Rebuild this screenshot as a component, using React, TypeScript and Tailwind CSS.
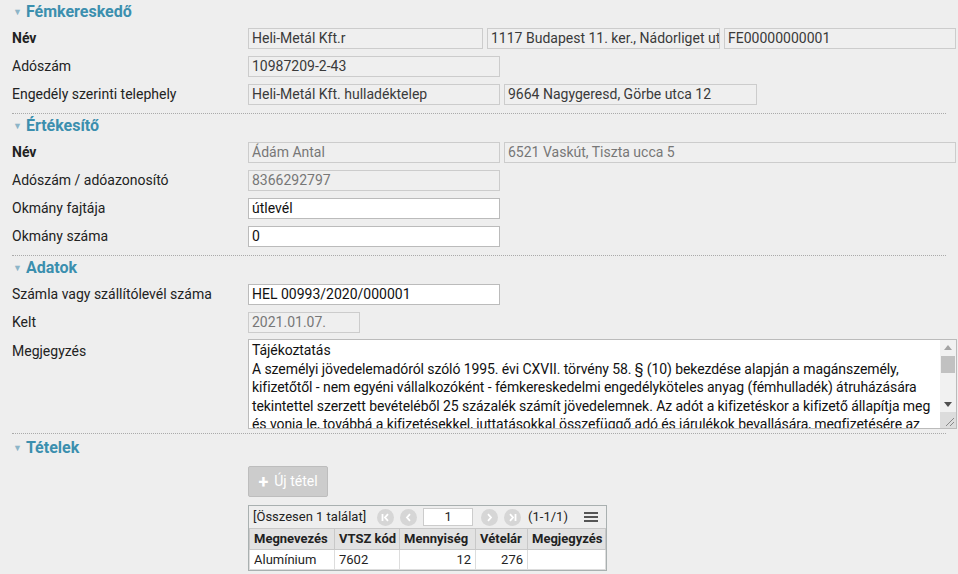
import React from 'react'

const font = { fontFamily: 'Roboto, "Noto Sans", Arial, sans-serif' }

function SectionHeader({ title, className = '' }: { title: string; className?: string }) {
  return (
    <div className={`flex h-[24px] items-center pl-[13px] ${className}`}>
      <span className="mr-[4px] text-[9px] leading-none text-[#8db5c8]">▼</span>
      <span className="text-[16px] font-bold text-[#3b8fae]">{title}</span>
    </div>
  )
}

function Row({ label, bold, children }: { label: string; bold?: boolean; children: React.ReactNode }) {
  return (
    <div className="flex h-[28px] items-center">
      <div className={`w-[248px] pl-[12px] text-[14px] text-[#222] ${bold ? 'font-bold' : ''}`}>{label}</div>
      <div className="flex gap-[4px]">{children}</div>
    </div>
  )
}

function Field({ value, w, ro = true, dark }: { value: string; w: string; ro?: boolean; dark?: boolean }) {
  return (
    <div
      className={`flex h-[21px] items-center overflow-hidden whitespace-nowrap border px-[3px] text-[14px] ${w} ${
        ro ? 'border-[#cccccc] bg-[#efefef]' : 'border-[#bbbbbb] bg-white'
      } ${dark ? 'text-[#3a3a3a]' : ro ? 'text-[#777]' : 'text-[#111]'}`}
    >
      {value}
    </div>
  )
}

function Sep({ className = '' }: { className?: string }) {
  return <div className={`mx-[12px] border-b border-dotted border-[#aaaaaa] ${className}`} />
}

function Circle({ dir, bar, className = '' }: { dir: 'l' | 'r'; bar?: boolean; className?: string }) {
  return (
    <span className={`flex h-[17px] w-[17px] shrink-0 items-center justify-center rounded-full bg-[#d6d6d6] ${className}`}>
      <svg width="9" height="9" viewBox="0 0 9 9" fill="none" stroke="#fff" strokeWidth="1.8">
        {dir === 'l' ? (
          <>
            {bar && <path d="M1.5 1v7" />}
            <path d={bar ? 'M7 1.2 4 4.5 7 7.8' : 'M6 1.2 3 4.5 6 7.8'} />
          </>
        ) : (
          <>
            <path d={bar ? 'M2 1.2 5 4.5 2 7.8' : 'M3 1.2 6 4.5 3 7.8'} />
            {bar && <path d="M7.5 1v7" />}
          </>
        )}
      </svg>
    </span>
  )
}

const note =
  'Tájékoztatás\nA személyi jövedelemadóról szóló 1995. évi CXVII. törvény 58. § (10) bekezdése alapján a magánszemély, kifizetőtől - nem egyéni vállalkozóként - fémkereskedelmi engedélyköteles anyag (fémhulladék) átruházására tekintettel szerzett bevételéből 25 százalék számít jövedelemnek. Az adót a kifizetéskor a kifizető állapítja meg és vonja le, továbbá a kifizetésekkel, juttatásokkal összefüggő adó és járulékok bevallására, megfizetésére az adóhatóság felé a kifizető köteles.'

function NoteBox() {
  return (
    <div className="flex h-[90px] w-[709px] border border-[#bbbbbb] bg-white">
      <div className="flex-1 overflow-hidden whitespace-pre-wrap pl-[3px] pr-[1px] pt-[1px] text-[14px] leading-[18.6px] tracking-[-0.08px] text-[#111]">
        {note}
      </div>
      <div className="flex w-[16px] flex-col bg-[#f1f1f1]">
        <div className="flex h-[15px] items-center justify-center">
          <svg width="8" height="5" viewBox="0 0 8 5">
            <path d="M0 5 4 0 8 5z" fill="#a3a3a3" />
          </svg>
        </div>
        <div className="mx-[1px] mt-[1px] h-[17px] bg-[#c1c1c1]" />
        <div className="flex-1" />
        <div className="flex h-[15px] items-center justify-center">
          <svg width="8" height="5" viewBox="0 0 8 5">
            <path d="M0 0h8L4 5z" fill="#505050" />
          </svg>
        </div>
        <div className="flex h-[16px] items-end justify-end bg-[#dcdcdc] p-[2px]">
          <svg width="9" height="9" viewBox="0 0 9 9" stroke="#888" strokeWidth="1">
            <path d="M9 1 1 9M9 5 5 9" />
          </svg>
        </div>
      </div>
    </div>
  )
}

export default function App() {
  return (
    <div className="h-[574px] w-[958px] overflow-hidden bg-[#eeeeee]" style={font}>
      <SectionHeader title="Fémkereskedő" />
      <Row label="Név" bold>
        <Field value="Heli-Metál Kft.r" w="w-[235px]" dark />
        <Field value="1117 Budapest 11. ker., Nádorliget utca 7" w="w-[233px]" dark />
        <Field value="FE00000000001" w="w-[232px]" dark />
      </Row>
      <Row label="Adószám">
        <Field value="10987209-2-43" w="w-[252px]" dark />
      </Row>
      <Row label="Engedély szerinti telephely">
        <Field value="Heli-Metál Kft. hulladéktelep" w="w-[252px]" dark />
        <Field value="9664 Nagygeresd, Görbe utca 12" w="w-[253px]" dark />
      </Row>
      <Sep className="mt-[5px]" />

      <SectionHeader title="Értékesítő" />
      <Row label="Név" bold>
        <Field value="Ádám Antal" w="w-[252px]" />
        <Field value="6521 Vaskút, Tiszta ucca 5" w="w-[452px]" />
      </Row>
      <Row label="Adószám / adóazonosító">
        <Field value="8366292797" w="w-[252px]" />
      </Row>
      <Row label="Okmány fajtája">
        <Field value="útlevél" w="w-[252px]" ro={false} />
      </Row>
      <Row label="Okmány száma">
        <Field value="0" w="w-[252px]" ro={false} />
      </Row>
      <Sep className="mt-[5px]" />

      <SectionHeader title="Adatok" />
      <Row label="Számla vagy szállítólevél száma">
        <Field value="HEL 00993/2020/000001" w="w-[252px]" ro={false} />
      </Row>
      <Row label="Kelt">
        <Field value="2021.01.07." w="w-[112px]" />
      </Row>
      <div className="mt-[3px] flex">
        <div className="w-[248px] pl-[12px] pt-[2px] text-[14px] text-[#222]">Megjegyzés</div>
        <NoteBox />
      </div>
      <Sep className="mt-[4px]" />

      <SectionHeader title="Tételek" className="mt-[2px]" />
      <div className="pl-[248px]">
        <button className="mt-[6px] flex h-[31px] w-[80px] items-center justify-center gap-[6px] rounded-[2px] border border-[#bdbdbd] bg-[#cccccc] text-[14px] text-white">
          <span className="text-[18px] font-bold leading-none">+</span>
          <span>Új tétel</span>
        </button>
        <div className="mt-[8px] w-[359px] whitespace-nowrap border border-[#a9b0b0] bg-white text-[13px] text-[#222]">
          <div className="flex h-[22px] items-center bg-[#eeeeee] pl-[4px]">
            <span>[Összesen 1 találat]</span>
            <Circle dir="l" bar className="ml-[11px]" />
            <Circle dir="l" className="ml-[6px]" />
            <div className="ml-[6px] flex h-[18px] w-[50px] shrink-0 items-center justify-center border border-[#cccccc] bg-white">
              1
            </div>
            <Circle dir="r" className="ml-[8px]" />
            <Circle dir="r" bar className="ml-[6px]" />
            <span className="ml-[7px]">(1-1/1)</span>
            <svg className="ml-[16px] shrink-0" width="14" height="12" viewBox="0 0 14 12">
              <rect x="0" y="1" width="14" height="2" fill="#555" />
              <rect x="0" y="5" width="14" height="2" fill="#555" />
              <rect x="0" y="9" width="14" height="2" fill="#555" />
            </svg>
          </div>
          <table className="w-full table-fixed border-collapse">
            <thead>
              <tr className="h-[20px] bg-[#e2e2e2] font-bold">
                <td className="w-[85px] border border-[#c8c8c8] px-[4px]">Megnevezés</td>
                <td className="w-[65px] border border-[#c8c8c8] px-[4px]">VTSZ kód</td>
                <td className="w-[76px] border border-[#c8c8c8] px-[4px]">Mennyiség</td>
                <td className="w-[52px] border border-[#c8c8c8] px-[4px]">Vételár</td>
                <td className="border border-[#c8c8c8] px-[4px]">Megjegyzés</td>
              </tr>
            </thead>
            <tbody>
              <tr className="h-[19px]">
                <td className="border border-[#dddddd] px-[4px]">Alumínium</td>
                <td className="border border-[#dddddd] px-[4px]">7602</td>
                <td className="border border-[#dddddd] px-[4px] text-right">12</td>
                <td className="border border-[#dddddd] px-[4px] text-right">276</td>
                <td className="border border-[#dddddd] px-[4px]"></td>
              </tr>
            </tbody>
          </table>
        </div>
      </div>
    </div>
  )
}
